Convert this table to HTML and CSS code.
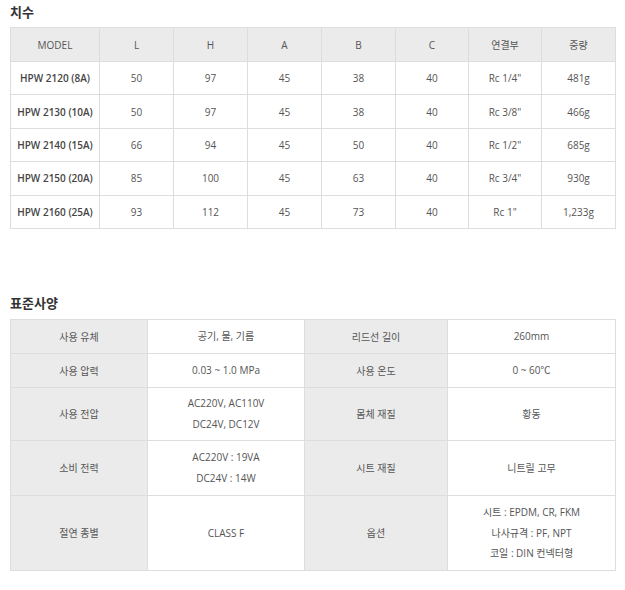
FILE: index.html
```html
<!DOCTYPE html>
<html lang="ko">
<head>
<meta charset="utf-8">
<link rel="stylesheet" href="styles.css">
</head>
<body>
<h3 class="title">치수</h3>
<table class="spec dim">
  <colgroup>
    <col style="width:89px"><col style="width:74px"><col style="width:74px"><col style="width:74px"><col style="width:74px"><col style="width:73px"><col style="width:73px"><col style="width:74px">
  </colgroup>
  <thead>
    <tr><th>MODEL</th><th>L</th><th>H</th><th>A</th><th>B</th><th>C</th><th>연결부</th><th>중량</th></tr>
  </thead>
  <tbody>
    <tr><td class="model">HPW 2120 (8A)</td><td>50</td><td>97</td><td>45</td><td>38</td><td>40</td><td>Rc 1/4"</td><td>481g</td></tr>
    <tr><td class="model">HPW 2130 (10A)</td><td>50</td><td>97</td><td>45</td><td>38</td><td>40</td><td>Rc 3/8"</td><td>466g</td></tr>
    <tr><td class="model">HPW 2140 (15A)</td><td>66</td><td>94</td><td>45</td><td>50</td><td>40</td><td>Rc 1/2"</td><td>685g</td></tr>
    <tr><td class="model">HPW 2150 (20A)</td><td>85</td><td>100</td><td>45</td><td>63</td><td>40</td><td>Rc 3/4"</td><td>930g</td></tr>
    <tr><td class="model">HPW 2160 (25A)</td><td>93</td><td>112</td><td>45</td><td>73</td><td>40</td><td>Rc 1"</td><td>1,233g</td></tr>
  </tbody>
</table>

<h3 class="title second">표준사양</h3>
<table class="spec std">
  <colgroup>
    <col style="width:137px"><col style="width:157px"><col style="width:143px"><col style="width:168px">
  </colgroup>
  <tbody>
    <tr class="r1"><th>사용 유체</th><td>공기, 물, 기름</td><th>리드선 길이</th><td>260mm</td></tr>
    <tr class="r1"><th>사용 압력</th><td>0.03 ~ 1.0 MPa</td><th>사용 온도</th><td>0 ~ 60℃</td></tr>
    <tr class="r2"><th>사용 전압</th><td>AC220V, AC110V<br>DC24V, DC12V</td><th>몸체 재질</th><td>황동</td></tr>
    <tr class="r3"><th>소비 전력</th><td>AC220V : 19VA<br>DC24V : 14W</td><th>시트 재질</th><td>니트릴 고무</td></tr>
    <tr class="r4"><th>절연 종별</th><td>CLASS F</td><th>옵션</th><td>시트 : EPDM, CR, FKM<br>나사규격 : PF, NPT<br>코일 : DIN 컨넥터형</td></tr>
  </tbody>
</table>
</body>
</html>
```

FILE: styles.css
```css
html, body {
  margin: 0;
  padding: 0;
  background: #fff;
}
body {
  padding: 4px 10px 0 10px;
  font-family: "Open Sans", "Noto Sans CJK KR", sans-serif;
  color: #555;
}
.title {
  margin: 0;
  height: 23px;
  font-size: 13px;
  font-weight: bold;
  color: #333;
  line-height: 16px;
  font-family: "Noto Sans CJK KR", sans-serif;
}
.title.second {
  margin-top: 66px;
  height: 24px;
}
.spec {
  border-collapse: collapse;
  table-layout: fixed;
  width: 605px;
  font-size: 10px;
}
.spec th, .spec td {
  border: 1px solid #dddddd;
  text-align: center;
  vertical-align: middle;
  padding: 0;
  font-weight: normal;
  color: #555;
}
.dim thead th {
  background: #ebebeb;
  height: 33px;
}
.dim tbody td {
  height: 32.4px;
}
.dim td.model {
  font-weight: 600;
  color: #444;
}
.std th {
  background: #ebebeb;
}
.std td {
  background: #fff;
  line-height: 20.5px;
}
.std tr.r1 th, .std tr.r1 td { height: 33px; }
.std tr.r2 th, .std tr.r2 td { height: 52px; }
.std tr.r3 th, .std tr.r3 td { height: 54px; }
.std tr.r4 th, .std tr.r4 td { height: 74px; }
```
